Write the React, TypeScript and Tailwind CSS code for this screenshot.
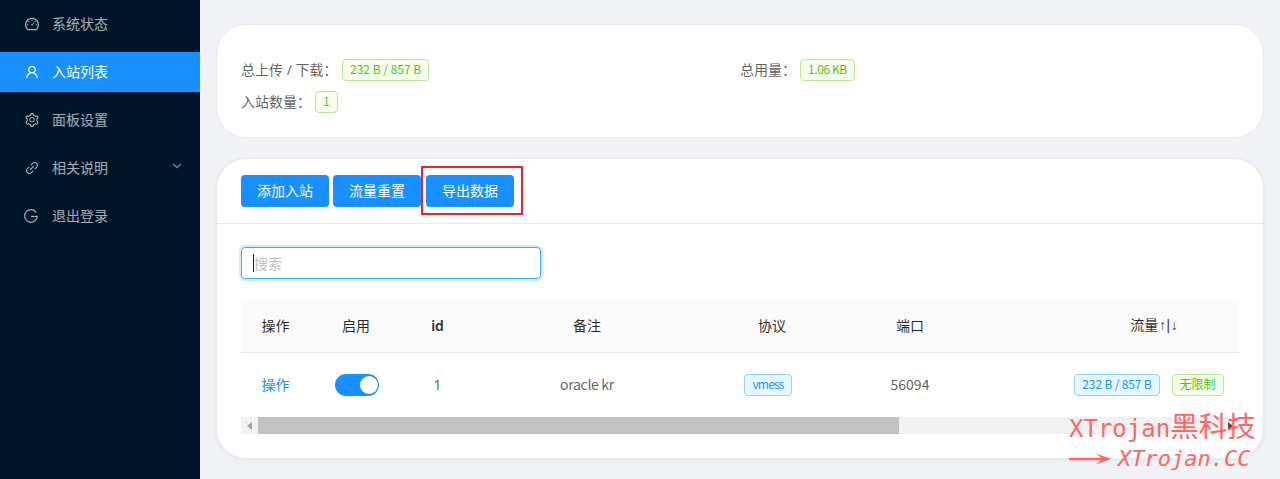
import type { ReactNode } from "react";
import { AiOutlineDashboard, AiOutlineLink, AiOutlineSetting, AiOutlineUser } from "react-icons/ai";

const LogoutIcon = () => (
  <svg width="14" height="14" viewBox="0 0 14 14" fill="none" stroke="currentColor" strokeWidth="1.2">
    <path d="M12.2 3.4A6.3 6.3 0 1 0 13.2 8" />
    <path d="M7 7.400h6.800" />
  </svg>
);

const menuItems = [
  { label: "系统状态", icon: <AiOutlineDashboard size={16} /> },
  { label: "入站列表", icon: <AiOutlineUser size={16} />, active: true },
  { label: "面板设置", icon: <AiOutlineSetting size={16} /> },
  { label: "相关说明", icon: <AiOutlineLink size={16} />, arrow: true },
  { label: "退出登录", icon: <LogoutIcon /> },
];

const GreenTag = ({ children, className = "" }: { children: ReactNode; className?: string }) => (
  <span className={`flex h-[22px] items-center rounded border border-[#b7eb8f] bg-[#f6ffed] px-[7px] pb-[2px] font-['Noto_Sans_CJK_SC',sans-serif] text-xs text-[#52c41a] ${className}`}>
    {children}
  </span>
);

const BlueTag = ({ children, className = "" }: { children: ReactNode; className?: string }) => (
  <span className={`flex h-[22px] items-center rounded border border-[#91d5ff] bg-[#e6f7ff] px-[7px] pb-[2px] font-['Noto_Sans_CJK_SC',sans-serif] text-xs text-[#1890ff] ${className}`}>
    {children}
  </span>
);

const PrimaryButton = ({ children }: { children: ReactNode }) => (
  <button className="h-8 w-[88px] rounded bg-[#1890ff] text-sm text-white shadow-[0_2px_0_rgba(0,0,0,0.03)]">
    {children}
  </button>
);

const gridCols = "grid grid-cols-[69px_92px_71px_228px_142px_134px_352px] w-[1088px]";

export default function App() {
  return (
    <div className="flex h-[479px] w-full overflow-hidden bg-[#f0f2f5] font-['Noto_Sans','Noto_Sans_CJK_SC',sans-serif] text-sm text-black/65">
      <aside className="flex w-[200px] shrink-0 flex-col gap-2 bg-[#001529] pt-1 text-white/65">
        {menuItems.map((item) => (
          <div
            key={item.label}
            className={
              item.active
                ? "flex h-10 items-center gap-[12px] bg-[#1890ff] pl-6 pr-[18px] text-white"
                : "flex h-10 items-center gap-[12px] pl-6 pr-[18px]"
            }
          >
            <span className="flex w-4 justify-start">{item.icon}</span>
            <span className="flex-1">{item.label}</span>
            {item.arrow && (
              <svg width="10" height="6" viewBox="0 0 10 6" fill="none" stroke="currentColor" strokeWidth="1.4" className="mb-1 opacity-70">
                <path d="M1 1l4 3.500L9 1" />
              </svg>
            )}
          </div>
        ))}
      </aside>

      <main className="relative flex min-w-0 flex-1 flex-col gap-5 px-4 pt-6">
        <section className="shrink-0 rounded-[30px] border border-[#e8e8e8] bg-white p-6">
          <div className="grid grid-cols-2">
            <div className="flex h-8 items-end">
              <span className="flex h-[22px] w-[101px] items-center whitespace-nowrap">总上传 / 下载：</span>
              <GreenTag>232 B / 857 B</GreenTag>
            </div>
            <div className="flex h-8 items-end">
              <span className="flex h-[22px] w-[60px] items-center whitespace-nowrap">总用量：</span>
              <GreenTag className="tracking-[-0.4px]">1.06 KB</GreenTag>
            </div>
            <div className="flex h-8 items-end">
              <span className="flex h-[22px] w-[74px] items-center whitespace-nowrap">入站数量：</span>
              <GreenTag>1</GreenTag>
            </div>
          </div>
        </section>

        <section className="relative shrink-0 rounded-[30px] border border-[#e8e8e8] bg-white shadow-[0_1px_4px_rgba(0,0,0,0.06)]">
          <div className="flex h-[65px] items-center gap-1 border-b border-[#e8e8e8] px-6">
            <PrimaryButton>添加入站</PrimaryButton>
            <PrimaryButton>流量重置</PrimaryButton>
            <div className="ml-[1px]">
              <PrimaryButton>导出数据</PrimaryButton>
            </div>
          </div>
          <div className="absolute left-[204px] top-[7px] h-[49px] w-[102px] border-2 border-[#f0212b]" />

          <div className="px-6 pt-[23px] pb-6">
            <div className="flex h-8 w-[300px] items-center rounded border border-[#40a9ff] px-[11px] text-[#bfbfbf] shadow-[0_0_0_2px_rgba(24,144,255,0.2)]">
              <span className="h-[18px] w-px bg-[#222]" />
              <span className="pt-[2px]">搜索</span>
            </div>

            <div className="mt-5 overflow-hidden">
              <div className={`${gridCols} h-[54px] items-center border-b border-[#e8e8e8] bg-[#fafafa] text-center text-black/85`}>
                <span>操作</span>
                <span>启用</span>
                <span className="font-semibold">id</span>
                <span>备注</span>
                <span>协议</span>
                <span>端口</span>
                <span>
                  流量<span className="font-['Liberation_Mono',monospace] tracking-[-2.5px]">↑|↓</span>
                </span>
              </div>
              <div className={`${gridCols} h-[64px] items-center text-center`}>
                <span className="text-[#1890ff]">操作</span>
                <span className="flex justify-center">
                  <span className="ml-[2px] flex h-[22px] w-[44px] items-center justify-end rounded-full bg-[#1890ff] pr-[1px]">
                    <span className="h-[18px] w-[18px] rounded-full bg-white" />
                  </span>
                </span>
                <span>1</span>
                <span className="pb-[2px] font-['Noto_Sans_CJK_SC',sans-serif] tracking-[-0.3px]">oracle kr</span>
                <span className="flex justify-center">
                  <BlueTag className="mr-2 tracking-[-0.8px]">vmess</BlueTag>
                </span>
                <span className="pb-[2px] font-['Noto_Sans_CJK_SC',sans-serif]">56094</span>
                <span className="flex justify-center gap-3">
                  <BlueTag className="tracking-[-0.15px]">232 B / 857 B</BlueTag>
                  <GreenTag className="mr-2">无限制</GreenTag>
                </span>
              </div>
              <div className="flex h-[17px] items-center bg-[#f1f1f1]">
                <span className="flex h-full w-[17px] items-center justify-center">
                  <span className="h-0 w-0 border-y-[4px] border-r-[5px] border-y-transparent border-r-[#a3a3a3]" />
                </span>
                <span className="h-full w-[641px] bg-[#c1c1c1]" />
                <span className="flex-1" />
                <span className="flex h-full w-[17px] items-center justify-center">
                  <span className="h-0 w-0 border-y-[4px] border-l-[5px] border-y-transparent border-l-[#505050]" />
                </span>
              </div>
            </div>
          </div>
        </section>

        <div className="pointer-events-none absolute left-[869px] top-[411px] text-[#ff6666]">
          <div className="whitespace-nowrap font-['DejaVu_Sans_Mono','Noto_Sans_CJK_SC',monospace] text-[24px] leading-[34px]">
            XTrojan<span className="text-[28.5px]">黑科技</span>
          </div>
          <div className="flex h-[26px] items-center gap-[6px]">
            <svg width="43" height="12" viewBox="0 0 43 12" fill="#ff6666">
              <path d="M0 4.800h32L27 .5l15 5.500-15 5.500 5-4.300H0z" />
            </svg>
            <span className="font-['DejaVu_Sans_Mono',monospace] text-[22px] italic leading-none">XTrojan.CC</span>
          </div>
        </div>
      </main>
    </div>
  );
}
